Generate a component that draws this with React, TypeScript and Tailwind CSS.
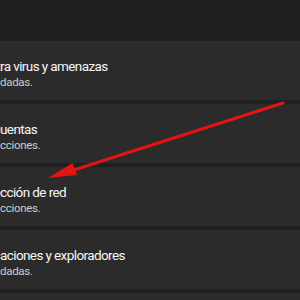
import React from "react";

const items = [
  { pre: "Protección cont", title: "ra virus y amenazas", subPre: "Acciones recomen", sub: "dadas." },
  { pre: "Protección de c", title: "uentas", subPre: "No se requieren a", sub: "cciones." },
  { pre: "Firewall y prote", title: "cción de red", subPre: "No se requieren a", sub: "cciones." },
  { pre: "Control de aplic", title: "aciones y exploradores", subPre: "Acciones recomen", sub: "dadas." },
  { pre: "Seguridad del ", title: "dispositivo", subPre: "Ver el estado y ad", sub: "ministrar." },
];

function Clip({ pre, text }: { pre: string; text: string }) {
  return (
    <div className="flex whitespace-nowrap">
      <span className="w-0 shrink-0 flex justify-end overflow-visible">{pre}</span>
      <span>{text}</span>
    </div>
  );
}

export default function App() {
  return (
    <div
      className="relative w-[300px] h-[300px] overflow-hidden bg-[#202020]"
      style={{ fontFamily: 'Roboto, "Noto Sans", sans-serif' }}
    >
      <div className="flex flex-col gap-[4px] pt-[41px]">
        {items.map((it, i) => (
          <div key={i} className="h-[59px] shrink-0 bg-[#2b2b2b] pt-[17px]">
            <div className="text-[13.5px] leading-[16px] tracking-[-0.6px] text-[#f6f6f6]">
              <Clip pre={it.pre} text={it.title} />
            </div>
            <div className="mt-[2px] text-[11.5px] leading-[12px] tracking-[-0.3px] text-[#cbcbcb]">
              <Clip pre={it.subPre} text={it.sub} />
            </div>
          </div>
        ))}
      </div>
      <svg className="absolute left-0 top-0" width="300" height="300" viewBox="0 0 300 300">
        <line x1="283" y1="103" x2="66" y2="172.5" stroke="#e31414" strokeWidth="3" strokeLinecap="round" />
        <polygon points="48,178 77,175 72.5,163" fill="#e31414" />
      </svg>
    </div>
  );
}
